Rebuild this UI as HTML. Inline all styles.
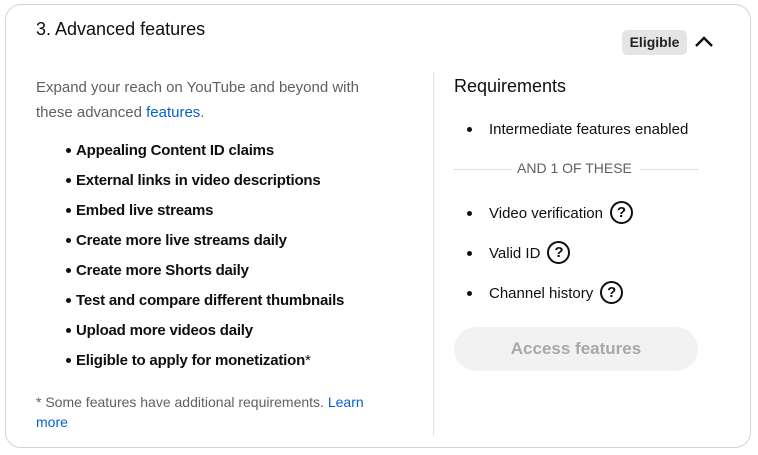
<!DOCTYPE html>
<html><head><style>
*{margin:0;padding:0;box-sizing:border-box}
body{width:758px;height:455px;background:#fff;font-family:"Liberation Sans",sans-serif;color:#0f0f0f;position:relative;overflow:hidden}
.card{position:absolute;left:5px;top:4px;width:746px;height:444px;border:1px solid #d3d3d3;border-radius:16px}
.a{position:absolute;white-space:nowrap}
.li{position:absolute;left:76px;font-size:15px;line-height:20px;font-weight:bold;color:#0f0f0f;letter-spacing:-0.2px}
.li::before{content:"";position:absolute;left:-10px;top:7px;width:5px;height:5px;border-radius:50%;background:#0f0f0f}
.ri{position:absolute;left:489px;font-size:15px;line-height:20px}
.ri::before{content:"";position:absolute;left:-22px;top:7px;width:5px;height:5px;border-radius:50%;background:#0f0f0f}
.q{display:inline-block;width:23px;height:23px;border:2px solid #0f0f0f;border-radius:50%;text-align:center;font-size:15px;font-weight:bold;line-height:19px;vertical-align:middle;margin-left:7px;margin-top:-3px}
</style></head><body>
<div class="card"></div>
<div class="a" style="left:36px;top:19px;font-size:18px">3. Advanced features</div>
<div class="a" style="left:622px;top:30px;height:25px;width:65px;background:#e5e5e5;border-radius:5px;font-size:14px;font-weight:bold;line-height:25px;text-align:center;color:#222">Eligible</div>
<svg class="a" style="left:694px;top:33px" width="20" height="16" viewBox="0 0 20 16"><path d="M2 13 L10 5 L18 13" fill="none" stroke="#0f0f0f" stroke-width="2.4"/></svg>
<div class="a" style="left:36px;top:75px;font-size:15px;line-height:25px;color:#606060">Expand your reach on YouTube and beyond with<br>these advanced <span style="color:#065fd4">features</span>.</div>
<div class="li" style="top:141px">Appealing Content ID claims</div>
<div class="li" style="top:171px">External links in video descriptions</div>
<div class="li" style="top:201px">Embed live streams</div>
<div class="li" style="top:231px">Create more live streams daily</div>
<div class="li" style="top:261px">Create more Shorts daily</div>
<div class="li" style="top:291px">Test and compare different thumbnails</div>
<div class="li" style="top:321px">Upload more videos daily</div>
<div class="li" style="top:351px">Eligible to apply for monetization<span style="font-weight:normal">*</span></div>
<div class="a" style="left:36px;top:392px;font-size:14px;line-height:20px;color:#606060">* Some features have additional requirements. <span style="color:#065fd4">Learn</span><br><span style="color:#065fd4">more</span></div>
<div class="a" style="left:433px;top:72px;width:1px;height:364px;background:#e0e0e0"></div>
<div class="a" style="left:454px;top:76px;font-size:18px">Requirements</div>
<div class="ri" style="top:120px">Intermediate features enabled</div>
<div class="a" style="left:454px;top:169px;width:58px;height:1px;background:#ddd"></div>
<div class="a" style="left:640px;top:169px;width:58px;height:1px;background:#ddd"></div>
<div class="a" style="left:517px;top:160px;font-size:14px;color:#606060">AND 1 OF THESE</div>
<div class="ri" style="top:204px">Video verification<span class="q">?</span></div>
<div class="ri" style="top:244px">Valid ID<span class="q">?</span></div>
<div class="ri" style="top:284px">Channel history<span class="q">?</span></div>
<div class="a" style="left:454px;top:327px;width:244px;height:44px;border-radius:22px;background:#f2f2f2;color:#a8a8a8;font-size:17px;font-weight:bold;text-align:center;line-height:44px">Access features</div>
</body></html>
